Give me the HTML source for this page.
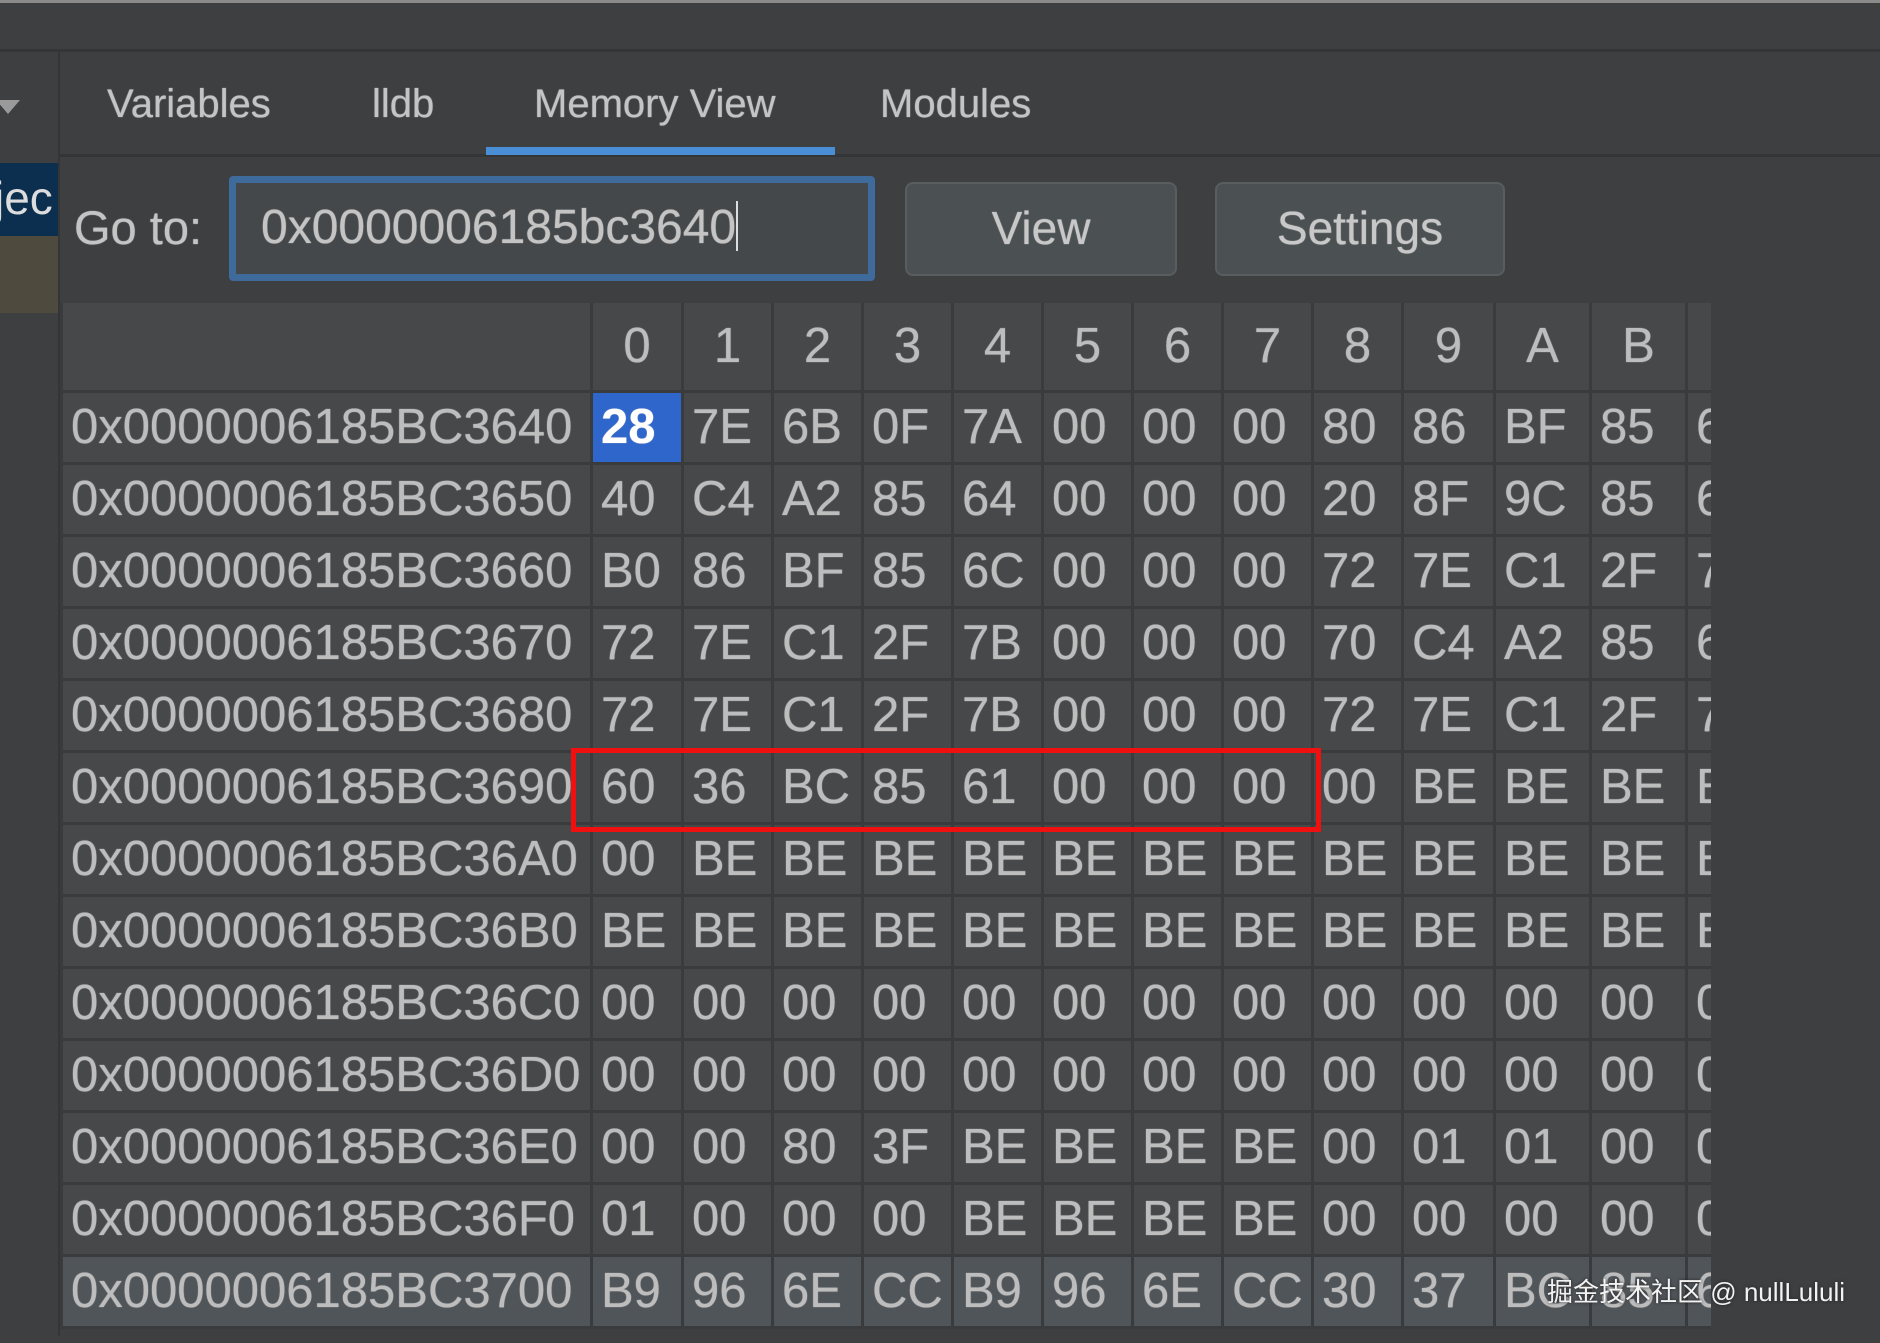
<!DOCTYPE html>
<html><head><meta charset="utf-8">
<style>
*{margin:0;padding:0;box-sizing:border-box}
body{width:1880px;height:1336px;background:#3d3f41;position:relative;overflow:hidden;font-family:"Liberation Sans","Noto Sans CJK SC",sans-serif;color:#bcbcbc}
.abs{position:absolute}
.tab{position:absolute;top:82px;font-size:40px;color:#c4c4c4;text-shadow:0 0 1px #c4c4c4}
table{border-collapse:collapse;table-layout:fixed}
td{border:3px solid #393b3d;background:#46484a;height:72px;font-size:49px;padding-left:8px;white-space:nowrap;overflow:hidden;color:#bdbdbd;text-shadow:0 0 1px #bdbdbd}
tr.h td{height:88px;text-align:center;padding-left:0;border-top:none}
tr.last td{background:#50555a}
td.sel{background:#2f66cc;color:#fff;font-weight:bold}
.btn{position:absolute;top:182px;height:94px;background:#4b5053;border:2px solid #585d60;border-radius:8px;font-size:46px;color:#c8c8c8;text-align:center;line-height:88px;text-shadow:0 0 1px #c8c8c8}
</style></head><body>
<div class="abs" style="left:0;top:0;width:1880px;height:3px;background:#8a8a8a"></div>
<div class="abs" style="left:0;top:49px;width:1880px;height:3px;background:#333537"></div>
<div class="abs" style="left:58px;top:52px;width:2px;height:1284px;background:#333537"></div>
<div class="abs" style="left:60px;top:154px;width:1820px;height:3px;background:#333537"></div>
<div class="abs" style="top:100px;width:0;height:0;border-left:12px solid transparent;border-right:12px solid transparent;border-top:14px solid #9a9a9a;left:-4px"></div>
<div class="abs" style="left:0;top:163px;width:58px;height:73px;background:#0d2f4f;font-size:46px;color:#ddd;line-height:70px;overflow:hidden;white-space:nowrap"><span style="margin-left:-6px">jec</span></div>
<div class="abs" style="left:0;top:236px;width:58px;height:77px;background:#4e4a3e"></div>

<div class="tab" style="left:107px">Variables</div>
<div class="tab" style="left:372px">lldb</div>
<div class="tab" style="left:534px">Memory View</div>
<div class="tab" style="left:880px">Modules</div>
<div class="abs" style="left:486px;top:147px;width:349px;height:8px;background:#4a8fd6"></div>

<div class="abs" style="left:74px;top:200px;font-size:47px;color:#c4c4c4;text-shadow:0 0 1px #c4c4c4">Go to:</div>
<div class="abs" style="left:229px;top:176px;width:646px;height:105px;border:7px solid #3e6a9c;border-radius:4px;background:#45484a"></div>
<div class="abs" style="left:261px;top:200px;font-size:48px;color:#c4c4c4;text-shadow:0 0 1px #c4c4c4">0x0000006185bc3640<span style="display:inline-block;width:2px;height:50px;background:#ddd;vertical-align:-8px"></span></div>
<div class="btn" style="left:905px;width:272px">View</div>
<div class="btn" style="left:1215px;width:290px">Settings</div>

<div class="abs" style="left:60px;top:303px;width:1651px;height:1040px;overflow:hidden">
<table style="width:1721px">
<colgroup><col style="width:530px"><col style="width:91px"><col style="width:90px"><col style="width:90px"><col style="width:90px"><col style="width:90px"><col style="width:90px"><col style="width:90px"><col style="width:90px"><col style="width:90px"><col style="width:92px"><col style="width:96px"><col style="width:96px"></colgroup>
<tr class="h"><td></td><td>0</td><td>1</td><td>2</td><td>3</td><td>4</td><td>5</td><td>6</td><td>7</td><td>8</td><td>9</td><td>A</td><td>B</td><td></td></tr>
<tr><td>0x0000006185BC3640</td><td class="sel">28</td><td>7E</td><td>6B</td><td>0F</td><td>7A</td><td>00</td><td>00</td><td>00</td><td>80</td><td>86</td><td>BF</td><td>85</td><td>64</td></tr>
<tr><td>0x0000006185BC3650</td><td>40</td><td>C4</td><td>A2</td><td>85</td><td>64</td><td>00</td><td>00</td><td>00</td><td>20</td><td>8F</td><td>9C</td><td>85</td><td>64</td></tr>
<tr><td>0x0000006185BC3660</td><td>B0</td><td>86</td><td>BF</td><td>85</td><td>6C</td><td>00</td><td>00</td><td>00</td><td>72</td><td>7E</td><td>C1</td><td>2F</td><td>7B</td></tr>
<tr><td>0x0000006185BC3670</td><td>72</td><td>7E</td><td>C1</td><td>2F</td><td>7B</td><td>00</td><td>00</td><td>00</td><td>70</td><td>C4</td><td>A2</td><td>85</td><td>64</td></tr>
<tr><td>0x0000006185BC3680</td><td>72</td><td>7E</td><td>C1</td><td>2F</td><td>7B</td><td>00</td><td>00</td><td>00</td><td>72</td><td>7E</td><td>C1</td><td>2F</td><td>7B</td></tr>
<tr><td>0x0000006185BC3690</td><td>60</td><td>36</td><td>BC</td><td>85</td><td>61</td><td>00</td><td>00</td><td>00</td><td>00</td><td>BE</td><td>BE</td><td>BE</td><td>BE</td></tr>
<tr><td>0x0000006185BC36A0</td><td>00</td><td>BE</td><td>BE</td><td>BE</td><td>BE</td><td>BE</td><td>BE</td><td>BE</td><td>BE</td><td>BE</td><td>BE</td><td>BE</td><td>BE</td></tr>
<tr><td>0x0000006185BC36B0</td><td>BE</td><td>BE</td><td>BE</td><td>BE</td><td>BE</td><td>BE</td><td>BE</td><td>BE</td><td>BE</td><td>BE</td><td>BE</td><td>BE</td><td>BE</td></tr>
<tr><td>0x0000006185BC36C0</td><td>00</td><td>00</td><td>00</td><td>00</td><td>00</td><td>00</td><td>00</td><td>00</td><td>00</td><td>00</td><td>00</td><td>00</td><td>00</td></tr>
<tr><td>0x0000006185BC36D0</td><td>00</td><td>00</td><td>00</td><td>00</td><td>00</td><td>00</td><td>00</td><td>00</td><td>00</td><td>00</td><td>00</td><td>00</td><td>00</td></tr>
<tr><td>0x0000006185BC36E0</td><td>00</td><td>00</td><td>80</td><td>3F</td><td>BE</td><td>BE</td><td>BE</td><td>BE</td><td>00</td><td>01</td><td>01</td><td>00</td><td>00</td></tr>
<tr><td>0x0000006185BC36F0</td><td>01</td><td>00</td><td>00</td><td>00</td><td>BE</td><td>BE</td><td>BE</td><td>BE</td><td>00</td><td>00</td><td>00</td><td>00</td><td>00</td></tr>
<tr class="last"><td>0x0000006185BC3700</td><td>B9</td><td>96</td><td>6E</td><td>CC</td><td>B9</td><td>96</td><td>6E</td><td>CC</td><td>30</td><td>37</td><td>BC</td><td>85</td><td>64</td></tr>
</table>
</div>
<div class="abs" style="left:571px;top:748px;width:750px;height:84px;border:5px solid #f01010"></div>
<div class="abs" style="left:1547px;top:1272px;font-size:26px;color:#f2f2f2;text-shadow:0 0 3px #222;white-space:nowrap">掘金技术社区 @ nullLululi</div>
</body></html>
